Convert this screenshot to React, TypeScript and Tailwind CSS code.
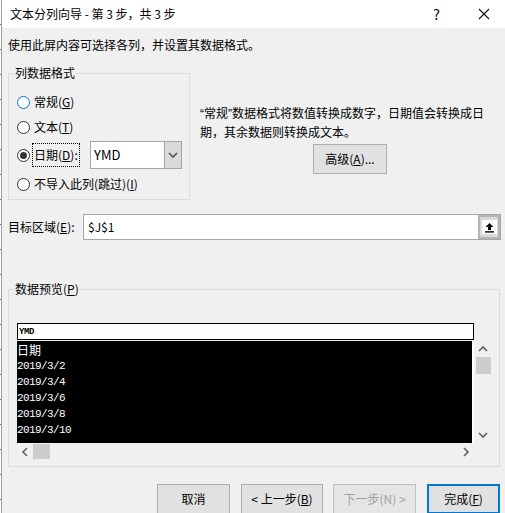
import React from "react";

const ui = "font-['Microsoft_YaHei_UI','Noto_Sans_CJK_SC',sans-serif]";
const latin = "font-['Liberation_Sans',sans-serif]";
const mono = "font-['Liberation_Mono','Noto_Sans_CJK_SC',monospace]";

function Radio({ checked = false, focus = false }: { checked?: boolean; focus?: boolean }) {
  return (
    <span
      className={`flex h-[13px] w-[13px] shrink-0 items-center justify-center rounded-full border bg-white ${
        focus ? "border-[#0078d7]" : "border-[#333333]"
      }`}
    >
      {checked && <span className="h-[7px] w-[7px] rounded-full bg-[#333333]" />}
    </span>
  );
}

function Chevron({ dir, className = "" }: { dir: "up" | "down" | "left" | "right"; className?: string }) {
  const pts: Record<string, string> = {
    up: "1,6 5,2 9,6",
    down: "1,2 5,6 9,2",
    left: "6,1 2,5 6,9",
    right: "2,1 6,5 2,9",
  };
  const vertical = dir === "up" || dir === "down";
  return (
    <svg
      width={vertical ? 10 : 8}
      height={vertical ? 8 : 10}
      viewBox={vertical ? "0 0 10 8" : "0 0 8 10"}
      className={className}
    >
      <polyline points={pts[dir]} fill="none" stroke="currentColor" strokeWidth="1.6" />
    </svg>
  );
}

function GroupBox({ title, className, children }: { title: React.ReactNode; className: string; children: React.ReactNode }) {
  return (
    <div className={`relative border border-[#dcdcdc] ${className}`}>
      <span className="absolute left-[5px] top-[-9px] bg-[#f0f0f0] px-[1px] leading-[16px]">{title}</span>
      {children}
    </div>
  );
}

function Btn({ children, className = "" }: { children: React.ReactNode; className?: string }) {
  return (
    <div className={`flex h-[30px] shrink-0 items-center justify-center leading-[16px] ${className}`}>{children}</div>
  );
}

const rows = ["2019/3/2", "2019/3/4", "2019/3/6", "2019/3/8", "2019/3/10"];

export default function App() {
  return (
    <div className={`flex h-[513px] w-[505px] overflow-hidden bg-[#f0f0f0] text-[12px] text-black ${ui}`}>
      {/* excel grid edge behind the dialog */}
      <div className="flex w-[2px] shrink-0 flex-col border-r border-[#a0a0a0] bg-white">
        {Array.from({ length: 21 }).map((_, i) => (
          <div key={i} className="flex h-[25px] shrink-0 flex-col justify-end">
            <div className="h-[1px] w-[1px] bg-[#2f7fc1]" />
          </div>
        ))}
      </div>

      <div className="flex min-w-0 flex-1 flex-col">
        {/* title bar */}
        <div className="flex h-[28px] shrink-0 items-center bg-white pl-[8px]">
          <span className="leading-[16px]">文本分列向导 - 第 3 步，共 3 步</span>
          <span className="ml-auto text-[14px] leading-[16px]">?</span>
          <svg width="12" height="12" viewBox="0 0 12 12" className="ml-[38px] mr-[15px]">
            <path d="M1 1 L11 11 M11 1 L1 11" stroke="#111" strokeWidth="1.1" />
          </svg>
        </div>

        <div className="flex flex-col pl-[6px]">
          <div className="mt-[9px] h-[16px] leading-[16px]">使用此屏内容可选择各列，并设置其数据格式。</div>

          <div className="mt-[20px] flex">
            <GroupBox title="列数据格式" className="h-[127px] w-[182px] shrink-0 pl-[8px] pt-[18px]">
              <div className="flex h-[20px] items-center">
                <Radio focus />
                <span className="ml-[4px] leading-[16px]">
                  常规(<u>G</u>)
                </span>
              </div>
              <div className="mt-[5px] flex h-[20px] items-center">
                <Radio />
                <span className="ml-[4px] leading-[16px]">
                  文本(<u>T</u>)
                </span>
              </div>
              <div className="mt-[4px] flex h-[28px] items-center">
                <Radio checked />
                <span className="ml-[2px] flex h-[24px] w-[48px] items-center border border-dotted border-black px-[1px] leading-[16px]">
                  日期(<u>D</u>):
                </span>
                <div className="ml-[10px] flex h-[28px] w-[92px] border border-[#a6a6a6] bg-white">
                  <span className="flex flex-1 items-center pl-[3px] text-[13px] leading-[16px]">YMD</span>
                  <span className="flex w-[17px] items-center justify-center border-l border-[#a6a6a6] bg-[#dadada] text-[#555]">
                    <Chevron dir="down" />
                  </span>
                </div>
              </div>
              <div className="mt-[5px] flex h-[20px] items-center">
                <Radio />
                <span className="ml-[4px] leading-[16px]">
                  不导入此列(跳过)(<u>I</u>)
                </span>
              </div>
            </GroupBox>

            <div className="ml-[10px] flex flex-col pt-[31px]">
              <div className="leading-[18px]">
                <span className={latin}>“</span>常规<span className={latin}>”</span>
                数据格式将数值转换成数字，日期值会转换成日
                <br />
                期，其余数据则转换成文本。
              </div>
              <Btn className="ml-[113px] mt-[3px] h-[29px] w-[74px] border border-[#adadad] bg-[#e1e1e1]">
                高级(<u>A</u>)...
              </Btn>
            </div>
          </div>

          <div className="mt-[14px] flex h-[26px] items-center">
            <span className="w-[75px] shrink-0 leading-[16px]">
              目标区域(<u>E</u>):
            </span>
            <div className="flex h-[26px] w-[418px] border border-[#a6a6a6] bg-white">
              <span className="flex flex-1 items-center pl-[4px] leading-[16px]">$J$1</span>
              <span className="flex w-[22px] items-center justify-center border-2 border-[#b4b4b4] bg-[#d9d9d9]">
                <span className="flex h-[14px] w-[15px] items-center justify-center bg-white">
                  <svg width="11" height="11" viewBox="0 0 11 11">
                    <path d="M5.5 1 L1.5 5 H4 V8 H7 V5 H9.5 Z" fill="#000" />
                    <rect x="1" y="9.2" width="9" height="1.4" fill="#000" />
                  </svg>
                </span>
              </span>
            </div>
          </div>

          <GroupBox
            title={
              <>
                数据预览(<u>P</u>)
              </>
            }
            className="mt-[49px] h-[178px] w-[492px] shrink-0 pl-[8px] pt-[33px]"
          >
            <div className="flex">
              <div className="flex w-[457px] flex-col">
                <div className="flex h-[17px] items-center border border-black bg-white pl-[1px]">
                  <span className={`${mono} text-[9px] font-bold leading-[10px] tracking-[-0.4px]`}>YMD</span>
                </div>
                <div
                  className={`mt-[1px] flex h-[102px] flex-col border-r-2 border-white bg-black pt-[1px] text-white ${mono}`}
                >
                  <div className={`h-[16px] ${ui} text-[12px] leading-[16px]`}>日期</div>
                  {rows.map((r) => (
                    <div key={r} className="h-[16px] text-[11px] leading-[16px] tracking-[-0.6px]">
                      {r}
                    </div>
                  ))}
                </div>
                <div className="flex h-[17px] items-center text-[#606060]">
                  <span className="flex w-[16px] justify-center">
                    <Chevron dir="left" />
                  </span>
                  <span className="h-[15px] w-[17px] bg-[#cdcdcd]" />
                  <span className="ml-auto flex w-[16px] justify-center">
                    <Chevron dir="right" />
                  </span>
                </div>
              </div>
              <div className="mt-[18px] flex h-[102px] w-[17px] flex-col items-center pl-[1px] text-[#606060]">
                <span className="flex h-[16px] items-center">
                  <Chevron dir="up" />
                </span>
                <span className="h-[17px] w-[15px] bg-[#cdcdcd]" />
                <span className="mt-auto flex h-[16px] items-center">
                  <Chevron dir="down" />
                </span>
              </div>
            </div>
          </GroupBox>

          <div className="mt-[17px] flex justify-end pr-[5px]">
            <Btn className="w-[73px] border border-[#adadad] bg-[#e1e1e1]">取消</Btn>
            <Btn className="ml-[11px] w-[82px] border border-[#adadad] bg-[#e1e1e1]">
              &lt; 上一步(<u>B</u>)
            </Btn>
            <Btn className="ml-[10px] w-[83px] border border-[#bfbfbf] bg-[#e5e5e5] text-[#a0a0a0]">下一步(N) &gt;</Btn>
            <Btn className="ml-[11px] w-[73px] border-2 border-[#0078d7] bg-[#e1e1e1]">
              完成(<u>F</u>)
            </Btn>
          </div>
        </div>
      </div>
    </div>
  );
}
